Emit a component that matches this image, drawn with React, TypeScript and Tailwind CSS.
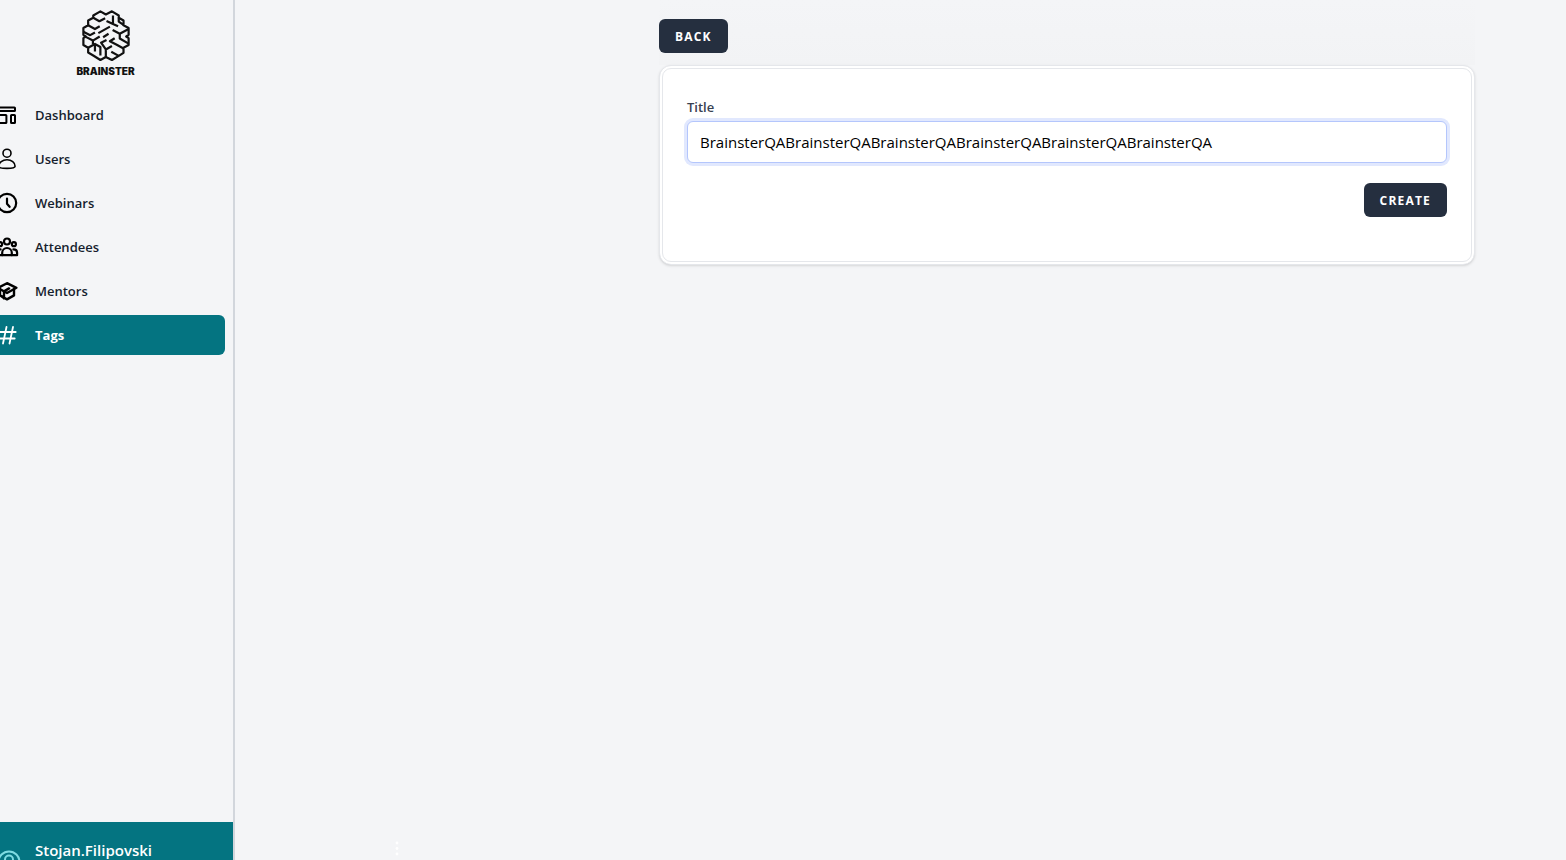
import { useState, FormEvent, ReactNode } from 'react';

const Icon = ({ children, width = 2 }: { children: ReactNode; width?: number }) => (
  <svg
    viewBox="0 0 24 24"
    className="size-6 shrink-0"
    fill="none"
    stroke="currentColor"
    strokeWidth={width}
    strokeLinecap="round"
    strokeLinejoin="round"
    aria-hidden="true"
  >
    {children}
  </svg>
);

const links = [
  {
    name: 'Dashboard',
    icon: (
      <Icon>
        <rect x="2" y="4.5" width="18" height="3.6" rx="0.6" />
        <rect x="2" y="12" width="9.4" height="8" rx="0.6" />
        <rect x="16" y="12" width="4" height="8" rx="0.6" />
      </Icon>
    ),
  },
  {
    name: 'Users',
    icon: (
      <Icon width={1.6}>
        <circle cx="12" cy="6.2" r="4" />
        <path d="M3.9 19.2c0-3.6 3.6-6.4 8.1-6.4s8.1 2.8 8.1 6.4c0 1.4-1.6 2.2-8.1 2.2s-8.1-.8-8.1-2.2z" />
      </Icon>
    ),
  },
  {
    name: 'Webinars',
    icon: (
      <Icon width={2.2}>
        <circle cx="12" cy="12" r="9.2" />
        <path d="M12 7.5v5.3l2.6 3" />
      </Icon>
    ),
  },
  {
    name: 'Attendees',
    icon: (
      <Icon width={2.2}>
        <circle cx="12" cy="6.5" r="3" />
        <circle cx="18.9" cy="9.2" r="2" />
        <circle cx="5.1" cy="9.2" r="2" />
        <path d="M7.2 20.2v-2.4a4.8 4.8 0 0 1 9.6 0v2.4z" />
        <path d="M18.4 14.4c2.2 0 3.7 1.3 3.7 3.3v2.5h-5.3M5.6 14.4c-2.2 0-3.7 1.3-3.7 3.3v2.5h5.3" />
      </Icon>
    ),
  },
  {
    name: 'Mentors',
    icon: (
      <Icon width={2.4}>
        <path d="M12 4.2L21.4 8.8 12 14 2.8 9z" />
        <path d="M5 10v6.4l7 4 7-4V10M14 9.4l-5 3v7M5.6 16.8L8.8 19" />
      </Icon>
    ),
  },
  {
    name: 'Tags',
    icon: (
      <Icon width={1.8}>
        <path d="M11.5 4L8 20.5M18 4l-3.5 16.5M4 9h16.7M3 15.5h16.7" />
      </Icon>
    ),
  },
];

const Logo = () => (
  <a href="#" className="flex flex-col items-center gap-1" aria-label="Brainster">
    <svg
      viewBox="34 14 141 150"
      className="h-[51px] w-[50px]"
      fill="none"
      stroke="#111"
      strokeWidth="6.5"
      strokeLinejoin="round"
      aria-hidden="true"
    >
      <path d="M104 27L88 18L67 30V37L52 45V59L38 67V87L45 92L38 97V117L52 125V139L67 148L88 161L104 152L122 161L142 149L156 140V125L171 117V97L164 92L171 87V67L156 59V45L142 37V30L122 18Z" />
      <path d="M67 37L85 47L102 38M52 59L72 70L86 62M38 78L58 88L72 80M82 82L116 63" />
      <path d="M125 30V55L106 46M125 55L140 62M142 37V48L156 58M171 70L145 84L124 73M145 84V98L171 113" />
      <path d="M45 93L66 104L86 92M52 125L72 114V136M72 114L88 123V148M66 104V114M96 94L112 84" />
      <path d="M104 152V130L90 110L106 102M104 130L122 120M142 149L120 137M156 127L136 116L116 106L130 97" />
    </svg>
    <span className="font-[Inter] text-[10px] leading-3 font-black text-[#111]">BRAINSTER</span>
  </a>
);

const Sidebar = () => (
  <aside className="flex w-[235px] shrink-0 flex-col overflow-hidden border-r-2 border-[#d2d6dc]">
    <div className="flex justify-center pt-2.5 pr-[22px]">
      <Logo />
    </div>
    <nav className="mt-[18px] mr-2 -ml-[5px] flex flex-col gap-1">
      {links.map(({ name, icon }) => (
        <a
          key={name}
          href="#"
          className={
            name === 'Tags'
              ? 'flex h-10 items-center gap-4 rounded-md bg-[#047481] text-[13px] font-bold text-white'
              : 'flex h-10 items-center gap-4 rounded-md text-[13px] font-semibold text-[#161e2e]'
          }
        >
          <span className={name === 'Tags' ? 'text-white' : 'text-black'}>{icon}</span>
          <span className="pt-0.5">{name}</span>
        </a>
      ))}
    </nav>
    <footer className="mt-auto h-[38px] overflow-hidden bg-[#047481] text-white">
      <div className="-ml-[3px] flex items-start gap-[14px] pt-[18px]">
        <svg viewBox="0 0 24 24" className="mt-2.5 size-6 shrink-0 text-[#7edce2]" fill="none" stroke="currentColor" strokeWidth="2" aria-hidden="true">
          <circle cx="12" cy="12" r="10.5" />
          <circle cx="12" cy="9.5" r="4" />
          <path d="M5.5 19.5c3-4 10-4 13 0" />
        </svg>
        <span className="text-[15px] leading-5 font-semibold">Stojan.Filipovski</span>
      </div>
    </footer>
  </aside>
);

export default function App() {
  const [title, setTitle] = useState('BrainsterQABrainsterQABrainsterQABrainsterQABrainsterQABrainsterQA');

  const handleSubmit = (e: FormEvent) => {
    e.preventDefault();
  };

  return (
    <div className="flex h-screen overflow-hidden bg-[#f4f5f7] font-['Open_Sans',sans-serif]">
      <Sidebar />
      <main className="flex min-w-0 flex-1 flex-col">
        <div className="mr-[91px] ml-auto w-full max-w-[816px]">
          <div className="bg-linear-to-b from-[#f4f5f7] to-[#f2f3f5] pt-[19px] pb-3">
            <button type="button" className="h-[34px] rounded-md bg-[#252f3f] px-4 pt-0.5 text-xs font-bold tracking-widest text-white uppercase">
              Back
            </button>
          </div>
          <form
            onSubmit={handleSubmit}
            className="flex flex-col rounded-xl border-4 border-double border-[#e5e7eb] bg-white px-6 pt-7 pb-11 shadow-sm"
          >
            <label htmlFor="title" className="text-[13px] leading-5 font-semibold text-[#374151]">
              Title
            </label>
            <input
              id="title"
              type="text"
              value={title}
              onChange={(e) => setTitle(e.target.value)}
              className="mt-1 h-[42px] rounded-md border border-[#b4c6fc] bg-white px-3 text-[15px] text-black ring-3 ring-[#e1e8fe] outline-none"
            />
            <button type="submit" className="mt-5 h-[34px] self-end rounded-md bg-[#252f3f] px-4 pt-0.5 text-xs font-bold tracking-widest text-white uppercase">
              Create
            </button>
          </form>
        </div>
        {/* menu dots */}
        <svg viewBox="0 0 4 20" className="mt-auto ml-40 h-5 w-1" fill="white" aria-hidden="true">
          <circle cx="2" cy="3" r="1.4" />
          <circle cx="2" cy="8.5" r="1.4" />
          <circle cx="2" cy="14" r="1.4" />
        </svg>
      </main>
    </div>
  );
}
